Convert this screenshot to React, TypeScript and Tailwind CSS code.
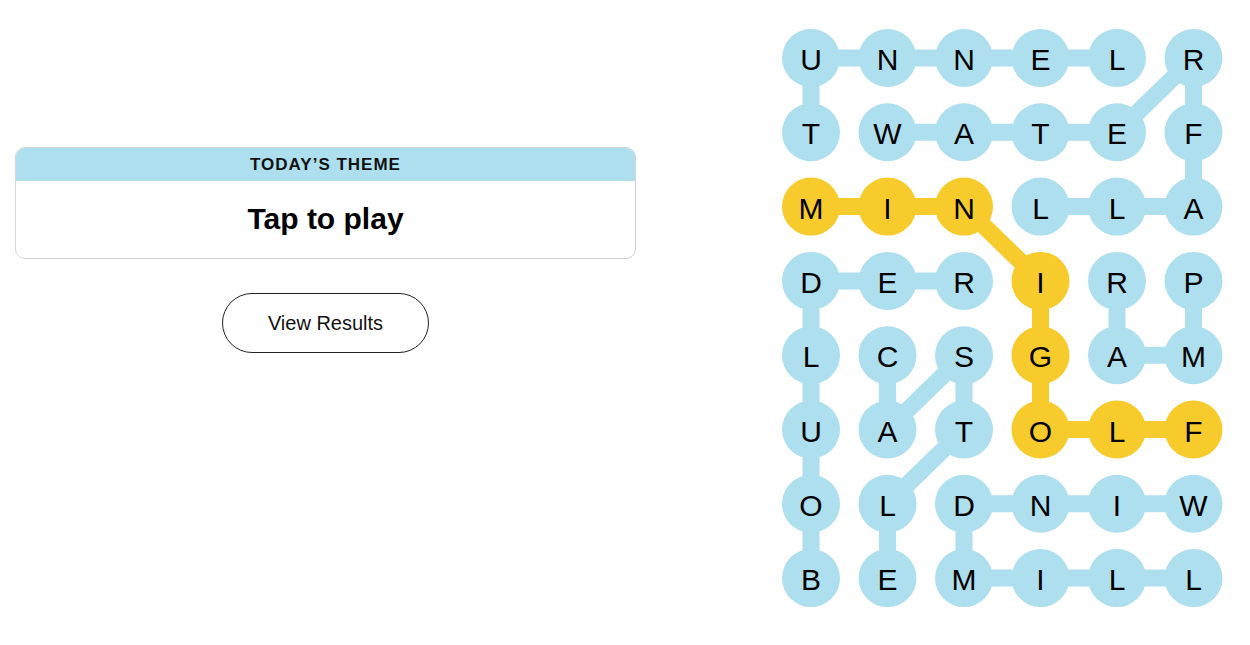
import React from "react";

const letters = [
  "UNNELR",
  "TWATEF",
  "MINLLA",
  "DERIRP",
  "LCSGAM",
  "UATOLF",
  "OLDNIW",
  "BEMILL",
];

// spangram cells, "row-col"
const spangram = new Set(["2-0", "2-1", "2-2", "3-3", "4-3", "5-3", "5-4", "5-5"]);

type Edge = [number, number, number, number];

const blueEdges: Edge[] = [
  [0, 0, 0, 1], [0, 1, 0, 2], [0, 2, 0, 3], [0, 3, 0, 4],
  [0, 5, 1, 4], [0, 5, 1, 5], [0, 0, 1, 0],
  [1, 1, 1, 2], [1, 2, 1, 3], [1, 3, 1, 4],
  [1, 5, 2, 5], [2, 3, 2, 4], [2, 4, 2, 5],
  [3, 0, 3, 1], [3, 1, 3, 2],
  [3, 0, 4, 0], [4, 0, 5, 0], [5, 0, 6, 0], [6, 0, 7, 0],
  [3, 4, 4, 4], [3, 5, 4, 5], [4, 4, 4, 5],
  [4, 1, 5, 1], [5, 1, 4, 2], [4, 2, 5, 2], [5, 2, 6, 1], [6, 1, 7, 1],
  [6, 2, 6, 3], [6, 3, 6, 4], [6, 4, 6, 5],
  [6, 2, 7, 2], [7, 2, 7, 3], [7, 3, 7, 4], [7, 4, 7, 5],
];

const yellowEdges: Edge[] = [
  [2, 0, 2, 1], [2, 1, 2, 2], [2, 2, 3, 3], [3, 3, 4, 3], [4, 3, 5, 3], [5, 3, 5, 4], [5, 4, 5, 5],
];

const BLUE = "#aedfee";
const YELLOW = "#f8cb2c";

const cx = (c: number) => 30 + c * 76.5;
const cy = (r: number) => 30 + r * 74.3;

const Board: React.FC = () => (
  <svg width={444} height={582} viewBox="0 0 444 582" className="block">
    {blueEdges.map(([r1, c1, r2, c2], i) => (
      <line key={`b${i}`} x1={cx(c1)} y1={cy(r1)} x2={cx(c2)} y2={cy(r2)} stroke={BLUE} strokeWidth={17} />
    ))}
    {yellowEdges.map(([r1, c1, r2, c2], i) => (
      <line key={`y${i}`} x1={cx(c1)} y1={cy(r1)} x2={cx(c2)} y2={cy(r2)} stroke={YELLOW} strokeWidth={17} />
    ))}
    {letters.map((row, r) =>
      row.split("").map((ch, c) => (
        <g key={`${r}-${c}`}>
          <circle cx={cx(c)} cy={cy(r)} r={29} fill={spangram.has(`${r}-${c}`) ? YELLOW : BLUE} />
          <text
            x={cx(c)}
            y={cy(r) + 12}
            textAnchor="middle"
            fontSize={30}
            fill="#000"
            style={{ fontFamily: '"Liberation Sans", Arial, sans-serif' }}
          >
            {ch}
          </text>
        </g>
      ))
    )}
  </svg>
);

export default function App() {
  return (
    <div className="flex h-[645px] w-[1250px] bg-white font-['Liberation_Sans',Arial,sans-serif] text-black">
      {/* Theme card + results */}
      <div className="w-[651px] shrink-0 px-[15px] pt-[147px]">
        <div className="overflow-hidden rounded-[10px] border border-[#d3d3d3]">
          <div className="flex h-[33px] items-center justify-center bg-[#aedfee] text-[17px] font-semibold tracking-[1px] text-[#121212]">
            TODAY’S THEME
          </div>
          <div className="flex h-[77px] items-center justify-center pb-[2px] text-[30px] font-bold">
            Tap to play
          </div>
        </div>
        <div className="mt-[34px] flex justify-center">
          <button className="h-[60px] w-[207px] rounded-full border border-[#222] bg-white text-[20px] text-[#121212]">
            View Results
          </button>
        </div>
      </div>

      {/* Board */}
      <div className="ml-[130px] pt-[28px]">
        <Board />
      </div>
    </div>
  );
}
